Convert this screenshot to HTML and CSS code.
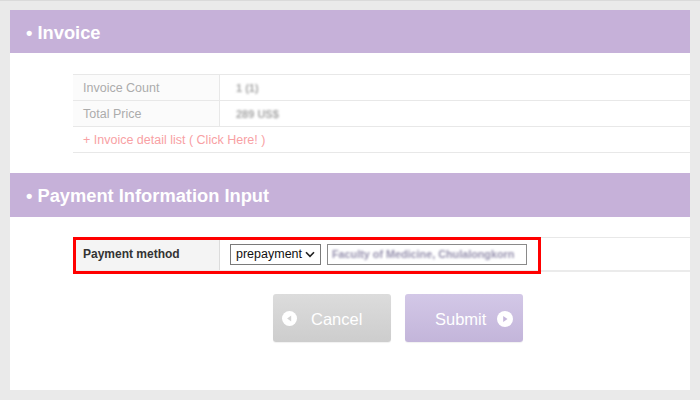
FILE: index.html
```html
<!DOCTYPE html>
<html>
<head>
<meta charset="utf-8">
<link rel="stylesheet" href="styles.css">
</head>
<body>
<div class="page">
  <div class="panel">
    <div class="section-head">• Invoice</div>
    <div class="table invoice">
      <div class="row">
        <div class="label">Invoice Count</div>
        <div class="value"><span class="blur">1 (1)</span></div>
      </div>
      <div class="row">
        <div class="label">Total Price</div>
        <div class="value"><span class="blur">289 US$</span></div>
      </div>
      <div class="row link-row">
        <a class="detail-link">+ Invoice detail list ( Click Here! )</a>
      </div>
    </div>

    <div class="section-head second">• Payment Information Input</div>
    <div class="table payment">
      <div class="row prow">
        <div class="label strong">Payment method</div>
        <div class="value pvalue">
          <div class="select">
            <span>prepayment</span>
            <svg class="chev" width="10" height="7" viewBox="0 0 10 7"><path d="M1 1.2 L5 5.4 L9 1.2" fill="none" stroke="#222" stroke-width="1.6"/></svg>
          </div>
          <div class="input"><span class="blur2">Faculty of Medicine, Chulalongkorn</span></div>
        </div>
      </div>
      <div class="highlight"></div>
    </div>

    <div class="buttons">
      <div class="btn cancel">
        <svg class="ico" width="15" height="15" viewBox="0 0 14 14"><circle cx="7" cy="7" r="7" fill="#fff"/><path d="M8.6 4.3 L4.8 7 L8.6 9.7 Z" fill="#d3d3d3"/></svg>
        <span>Cancel</span>
      </div>
      <div class="btn submit">
        <span>Submit</span>
        <svg class="ico" width="16" height="16" viewBox="0 0 14 14"><circle cx="7" cy="7" r="7" fill="#fff"/><path d="M5.4 4.3 L9.2 7 L5.4 9.7 Z" fill="#c6b7dc"/></svg>
      </div>
    </div>
  </div>
</div>
</body>
</html>
```
FILE: styles.css
```css
html, body {
  margin: 0;
  padding: 0;
}
body {
  background: #eaeaea;
  font-family: "Liberation Sans", Arial, sans-serif;
}
.page {
  width: 700px;
  height: 400px;
  box-sizing: border-box;
  border-top: 1px solid #dadada;
  padding: 9px 10px 10px 10px;
}
.panel {
  background: #fff;
  height: 380px;
  position: relative;
}
.section-head {
  background: #c6b1d9;
  height: 43px;
  line-height: 45px;
  color: #fff;
  font-weight: bold;
  font-size: 18.3px;
  padding-left: 16px;
}
.section-head.second {
  height: 44px;
  line-height: 46px;
  margin-top: 20px;
}
.table {
  margin-left: 63px;
  border-top: 1px solid #e8e8e8;
  position: relative;
}
.invoice {
  margin-top: 21px;
}
.row {
  display: flex;
  height: 25px;
  border-bottom: 1px solid #e8e8e8;
  font-size: 12.5px;
}
.label {
  width: 136px;
  padding-left: 10px;
  background: #fbfbfb;
  color: #acacac;
  border-right: 1px solid #e8e8e8;
  line-height: 26px;
}
.value {
  flex: 1;
  line-height: 26px;
  padding-left: 16px;
  color: #bbb;
}
.blur {
  filter: blur(1.1px);
  color: #a8a8a8;
  font-weight: bold;
  font-size: 11px;
}
.link-row {
  padding-left: 10px;
  line-height: 26px;
}
.detail-link {
  color: #f8a1a4;
  font-size: 12.5px;
}
.payment {
  margin-top: 20px;
  border-bottom: 2px solid #ebebeb;
}
.prow {
  height: 32px;
  border-bottom: none;
}
.label.strong {
  background: #f4f4f4;
  color: #333;
  font-weight: bold;
  font-size: 12px;
  line-height: 33px;
  border-right: 1px solid #dcdcdc;
}
.pvalue {
  display: flex;
  align-items: center;
  gap: 6px;
  padding-left: 10px;
}
.select {
  box-sizing: border-box;
  width: 91px;
  height: 21px;
  border: 1px solid #7a7a7a;
  display: flex;
  align-items: center;
  justify-content: space-between;
  padding: 0 5px 0 5px;
  font-size: 12.5px;
  color: #111;
  background: #fff;
  line-height: 19px;
}
.chev {
  display: block;
}
.input {
  box-sizing: border-box;
  width: 200px;
  height: 21px;
  border: 1px solid #8a8a8a;
  font-size: 11px;
  line-height: 19px;
  padding-left: 4px;
  overflow: hidden;
  white-space: nowrap;
}
.blur2 {
  filter: blur(1.1px);
  color: #9590ad;
  font-weight: bold;
  font-size: 10.8px;
}
.highlight {
  position: absolute;
  left: 0;
  top: -1px;
  width: 462px;
  height: 31px;
  border: 3px solid #ff0000;
  pointer-events: none;
}
.buttons {
  display: flex;
  gap: 14px;
  margin-top: 22px;
  padding-left: 263px;
}
.btn {
  width: 118px;
  height: 48px;
  box-sizing: border-box;
  border-radius: 3px;
  display: flex;
  align-items: center;
  color: #fff;
  font-size: 16.5px;
  padding-top: 3px;
  box-shadow: 0 1px 1px rgba(0,0,0,0.06);
}
.cancel {
  background: linear-gradient(#dcdcdc, #cdcdcd);
  padding-left: 9px;
}
.cancel .ico {
  margin-right: 14px;
  margin-top: -2px;
}
.submit {
  background: linear-gradient(#d3c8e7, #c3b5da);
  padding-left: 30px;
}
.submit .ico {
  margin-left: 11px;
  margin-top: -2px;
}
.ico {
  display: block;
}
```
